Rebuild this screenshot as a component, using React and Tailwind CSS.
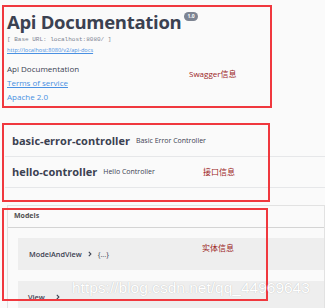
const Chevron = () => (
  <svg viewBox="0 0 10 10" className="h-[6px] w-[6px]" fill="none" stroke="#3b4151" strokeWidth="1.8">
    <path d="M3 1.5 6.5 5 3 8.5" />
  </svg>
);

const tags = [
  { name: "basic-error-controller", desc: "Basic Error Controller" },
  { name: "hello-controller", desc: "Hello Controller" },
];

function Note({ className, children }) {
  return (
    <div
      className={`absolute text-[8px] leading-none text-[#9b1c1c] ${className}`}
      style={{ fontFamily: '"Open Sans", "Noto Sans CJK SC", sans-serif' }}
    >
      {children}
    </div>
  );
}

export default function App() {
  return (
    <div
      className="relative h-[308px] w-[325px] overflow-hidden bg-[#fafafa] text-[#3b4151]"
      style={{ fontFamily: '"Open Sans", "Noto Sans CJK SC", sans-serif' }}
    >
      {/* info */}
      <div className="pl-[7px] pt-[11px]">
        <div className="flex items-start">
          <h1 className="text-[18.5px] font-bold leading-[22px] tracking-[-0.3px]">Api Documentation</h1>
          <span className="ml-[3px] mt-px flex h-[9px] items-center rounded-full bg-[#7d8492] px-[3px] text-[5px] font-bold leading-none text-white">
            1.0
          </span>
        </div>
        <div className="mt-[3px] font-['Liberation_Mono',monospace] text-[6px] leading-[8px] text-[#7d8492]">
          [ Base URL: localhost:8080/ ]
        </div>
        <div className="mt-[2px] text-[5.6px] leading-[8px] text-[#4990e2] underline">
          http://localhost:8080/v2/api-docs
        </div>
        <div className="mt-[10px] text-[8px] leading-[10px]">Api Documentation</div>
        <div className="mt-[4px] text-[8px] leading-[10px] text-[#4990e2] underline">Terms of service</div>
        <div className="mt-[4px] text-[8px] leading-[10px] text-[#4990e2]">Apache 2.0</div>
      </div>

      {/* tags */}
      <div className="ml-[5px] mt-[24px]">
        {tags.map((t) => (
          <div key={t.name} className="flex h-[31px] items-center border-b border-[#e6e7e9] pl-[7px]">
            <span className="text-[11px] font-bold">{t.name}</span>
            <span className="ml-[6px] text-[7px]">{t.desc}</span>
          </div>
        ))}
      </div>

      {/* models */}
      <div className="ml-[7px] mt-[17px] border border-[#e2e2e2]">
        <div className="flex h-[22px] items-center border-b border-[#d4d4d4] pl-[6px] text-[7px] font-bold text-[#505050]">
          Models
        </div>
        <div className="pl-[10px] pt-[10px]">
          <div className="flex h-[32px] items-center gap-[5px] bg-[#eeeeee] pl-[11px] text-[7.3px] font-semibold">
            <span>ModelAndView</span>
            <Chevron />
            <span className="font-normal text-[#3b4151]">{"{...}"}</span>
          </div>
          <div className="mt-[11px] flex h-[32px] items-center gap-[10px] bg-[#eeeeee] pl-[10px] text-[7.3px] font-semibold">
            <span>View</span>
            <Chevron />
          </div>
        </div>
      </div>

      {/* annotations */}
      <div className="absolute left-[2px] top-[5px] h-[103px] w-[270px] border-2 border-[#f0383e]" />
      <div className="absolute left-[2px] top-[123px] h-[79px] w-[268px] border-2 border-[#f0383e]" />
      <div className="absolute left-[2px] top-[208px] h-[93px] w-[266px] border-2 border-[#f0383e]" />
      <Note className="left-[189px] top-[70px]">Swagger信息</Note>
      <Note className="left-[203px] top-[168px]">接口信息</Note>
      <Note className="left-[202px] top-[244px]">实体信息</Note>

      <div
        className="absolute left-[72px] top-[278px] text-[15.5px] leading-[20px] text-white"
        style={{ fontFamily: '"Liberation Sans", sans-serif', textShadow: "0 0 1px rgba(0,0,0,0.25)" }}
      >
        https://blog.csdn.net/qq_44969643
      </div>
    </div>
  );
}
